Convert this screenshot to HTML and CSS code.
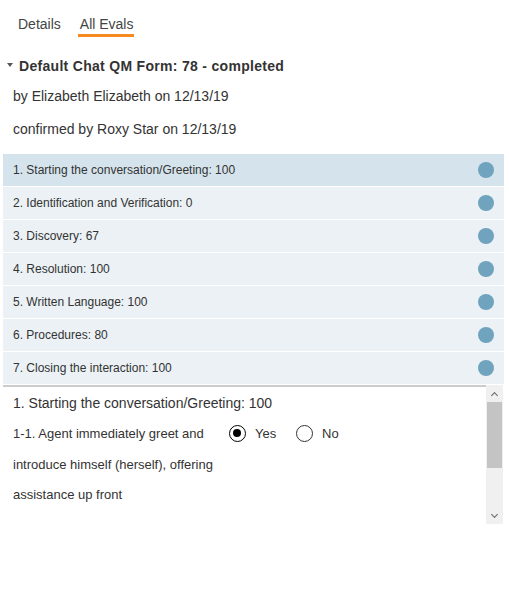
FILE: index.html
```html
<!DOCTYPE html>
<html lang="en">
<head>
    <meta charset="UTF-8">
    <title>All Evals</title>
    <link rel="stylesheet" href="styles.css">
</head>
<body>
    <div class="tabs">
        <span class="tab">Details</span>
        <span class="tab active">All Evals</span>
    </div>

    <div class="form-title">
        <span class="caret"></span>
        <span>Default Chat QM Form: 78 - completed</span>
    </div>
    <p class="meta">by Elizabeth Elizabeth on 12/13/19</p>
    <p class="meta">confirmed by Roxy Star on 12/13/19</p>

    <ul class="sections">
        <li class="selected">1. Starting the conversation/Greeting: 100<span class="dot"></span></li>
        <li>2. Identification and Verification: 0<span class="dot"></span></li>
        <li>3. Discovery: 67<span class="dot"></span></li>
        <li>4. Resolution: 100<span class="dot"></span></li>
        <li>5. Written Language: 100<span class="dot"></span></li>
        <li>6. Procedures: 80<span class="dot"></span></li>
        <li>7. Closing the interaction: 100<span class="dot"></span></li>
    </ul>

    <div class="detail">
        <div class="detail-body">
            <div class="detail-title">1. Starting the conversation/Greeting: 100</div>
            <div class="question">
                <span class="q-text">1-1. Agent immediately greet and</span>
                <span class="option"><span class="radio checked"></span>Yes</span>
                <span class="option"><span class="radio"></span>No</span>
            </div>
            <div class="q-line">introduce himself (herself), offering</div>
            <div class="q-line">assistance up front</div>
        </div>
        <div class="scrollbar">
            <span class="arrow up"></span>
            <span class="thumb"></span>
            <span class="track"></span>
            <span class="arrow down"></span>
        </div>
    </div>
</body>
</html>
```

FILE: styles.css
```css
body {
    font-family: "Liberation Sans", Arial, sans-serif;
    margin: 0;
    color: #333;
    background-color: #fff;
}
.tabs {
    display: flex;
    gap: 19px;
    padding: 15px 0 0 18px;
}
.tab {
    font-size: 14px;
    line-height: 18px;
    color: #444;
    padding-bottom: 2px;
}
.tab.active {
    border-bottom: 3px solid #f7891f;
    padding: 0 1px 1px 2px;
    margin-left: -2px;
}
.form-title {
    display: flex;
    align-items: center;
    gap: 6px;
    margin: 20px 0 0 7px;
    font-size: 14px;
    font-weight: bold;
    letter-spacing: 0.3px;
    line-height: 18px;
}
.caret {
    width: 0;
    height: 0;
    border-left: 3.5px solid transparent;
    border-right: 3.5px solid transparent;
    border-top: 4px solid #555;
    margin-top: -2px;
}
.meta {
    margin: 0;
    padding-left: 13px;
    font-size: 14px;
    line-height: 18px;
}
.form-title + .meta {
    margin-top: 12px;
}
.meta + .meta {
    margin-top: 15px;
}
.sections {
    list-style: none;
    margin: 16px 5px 0 3px;
    padding: 0;
}
.sections li {
    display: flex;
    align-items: center;
    justify-content: space-between;
    height: 32px;
    padding: 0 10px;
    font-size: 12px;
    background-color: #ebf1f5;
    border-bottom: 1px solid #fff;
}
.sections li.selected {
    background-color: #d5e4ec;
}
.dot {
    width: 16px;
    height: 16px;
    border-radius: 50%;
    background-color: #6fa3be;
}
.detail {
    display: flex;
    margin: 0 6px 0 3px;
    height: 139px;
}
.detail-body {
    flex: 1;
    border-top: 2px solid #ccc;
    padding-left: 10px;
    overflow: hidden;
}
.detail-title {
    font-size: 14px;
    line-height: 18px;
    margin-top: 7px;
}
.question {
    display: flex;
    align-items: center;
    font-size: 13px;
    margin-top: 12px;
    height: 18px;
}
.q-text {
    width: 216px;
}
.option {
    display: flex;
    align-items: center;
    gap: 9px;
    width: 67px;
}
.radio {
    width: 17px;
    height: 17px;
    border: 1px solid #333;
    border-radius: 50%;
    box-sizing: border-box;
    position: relative;
}
.radio.checked {
    border-width: 1.5px;
    border-color: #000;
}
.radio.checked::after {
    content: "";
    position: absolute;
    left: 3px;
    top: 3px;
    width: 8px;
    height: 8px;
    border-radius: 50%;
    background-color: #000;
}
.q-line {
    font-size: 13px;
    line-height: 18px;
    margin-top: 12px;
}
.question + .q-line {
    margin-top: 14px;
}
.scrollbar {
    width: 17px;
    display: flex;
    flex-direction: column;
    background-color: #f0f0f0;
}
.thumb {
    height: 66px;
    background-color: #c4c4c4;
    margin: 0 1px;
}
.track {
    flex: 1;
}
.arrow {
    height: 17px;
    display: flex;
    align-items: center;
    justify-content: center;
}
.arrow::before {
    content: "";
    width: 4px;
    height: 4px;
    border-left: 1.5px solid #666;
    border-top: 1.5px solid #666;
}
.arrow.up::before {
    transform: rotate(45deg);
    margin-top: 3px;
}
.arrow.down::before {
    transform: rotate(225deg);
    margin-top: -3px;
}
```
